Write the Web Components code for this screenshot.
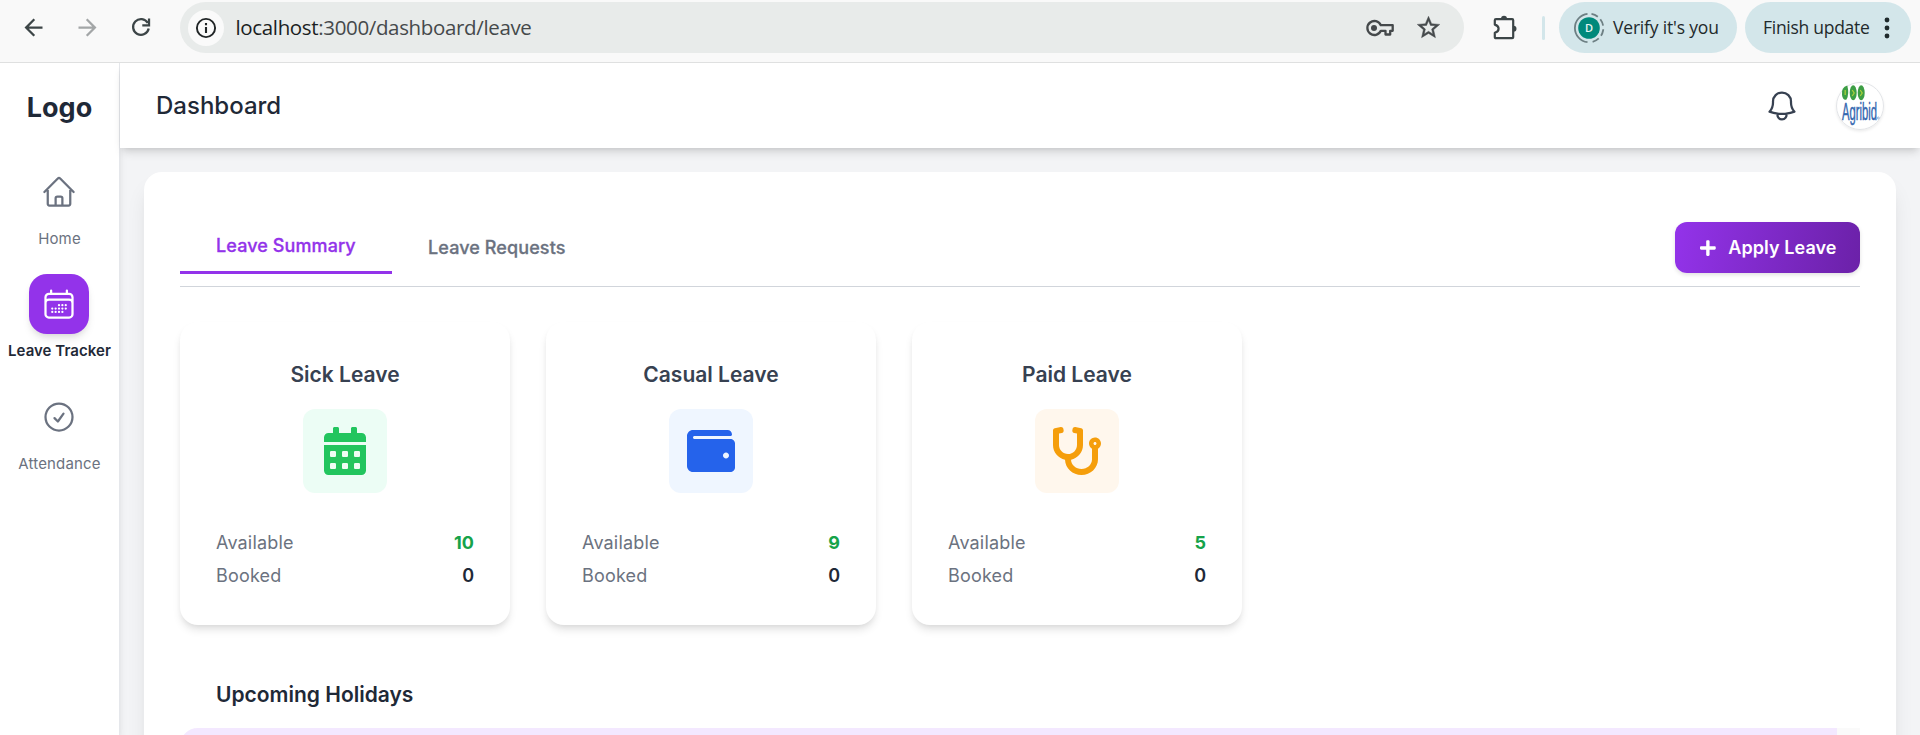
<!DOCTYPE html>
<html lang="en">
<head>
<meta charset="utf-8">
<title>Leave Tracker</title>
<style>
html,body{margin:0;height:100%;overflow:hidden;background:#f3f4f6;font-family:Inter,"Liberation Sans",sans-serif}
</style>
</head>
<body>
<leave-app></leave-app>
<script>
const define=(name,html)=>customElements.define(name,class extends HTMLElement{
  constructor(){super();const t=document.createElement('template');t.innerHTML=html;
    this.attachShadow({mode:'open'}).append(t.content.cloneNode(true));}
});

define('browser-bar',`
<style>
:host{display:flex;align-items:center;height:62px;box-sizing:content-box;background:#f9f9f9;border-bottom:1px solid #dfe0e0;font-family:"Open Sans","Noto Sans",sans-serif;color:#1f2a2c}
svg{display:block;flex:none}
.nav{display:flex;gap:27px;padding:0 28px 7px 20px;width:132px}
.url{display:flex;align-items:center;box-sizing:border-box;width:1284px;height:51px;margin-bottom:7px;border-radius:26px;background:#e8ebea;padding:0 22px 0 8px}
.info{width:36px;height:36px;border-radius:50%;background:#fafafa;display:grid;place-items:center;margin-right:11.5px}
.text{flex:1;font-size:20.5px;line-height:28px;letter-spacing:-.35px;color:#45494b;white-space:nowrap;padding-bottom:1px}
.text b{font-weight:400;color:#1b1e1f}
.tools{display:flex;align-items:center;gap:21px;color:#45494b}
.ext{margin:0 0 7px 28px}
.rule{width:3px;height:24px;border-radius:2px;background:#d3e6ea;margin:0 14px 7px 23px}
.pill{display:flex;align-items:center;box-sizing:border-box;height:51px;border-radius:26px;background:#d3e6ea;margin-bottom:7px;font-size:17.5px;line-height:26px;white-space:nowrap}
.verify{width:178px;padding-left:14px;margin-right:8px}
.verify svg{margin-right:8px}
.pill span{padding-bottom:1px}
.verify span{letter-spacing:-.18px}
.finish{width:166px;padding-left:18px}
.finish span{letter-spacing:-.28px;width:108px}
.finish svg{margin-left:13px}
</style>
<div class="nav">
<svg width="27" height="27" viewBox="0 0 24 24" fill="#3c4547"><path d="M20 11H7.83l5.59-5.59L12 4l-8 8 8 8 1.41-1.41L7.83 13H20v-2z"/></svg>
<svg width="27" height="27" viewBox="0 0 24 24" fill="#a3a6a7"><path d="M12 4l-1.41 1.41L16.17 11H4v2h12.17l-5.58 5.59L12 20l8-8z"/></svg>
<svg width="27" height="27" viewBox="0 0 24 24" fill="none" stroke="#3c4547" stroke-width="2"><path d="M17.6 8A7 7 0 1 0 18.400 12.9M18.700 4v6.200h-6"/></svg>
</div>
<div class="url"><div class="info"><svg width="22" height="22" viewBox="0 0 22 22" fill="none" stroke="#202526" stroke-width="1.9"><circle cx="11" cy="11" r="9.1"/><path d="M11 10v6M11 6v2.2" stroke-width="2.1"/></svg></div>
<div class="text"><b>localhost</b>:3000/dashboard/leave</div>
<div class="tools">
<svg width="28" height="20" viewBox="0 0 28 20" fill="none" stroke="#45494b" stroke-width="2.3"><path d="M14.8 7.2A7 7 0 1 0 14.8 12.8H19.5V16.5H24.2V12.8H26.7V7.2Z" stroke-linejoin="round"/><circle cx="8" cy="10" r="3" fill="#45494b" stroke="none"/></svg>
<svg width="27" height="27" viewBox="0 0 24 24" fill="#45494b" stroke="#45494b" stroke-width=".4"><path d="M22 9.24l-7.19-.62L12 2 9.19 8.63 2 9.24l5.46 4.73L5.82 21 12 17.27 18.18 21l-1.63-7.03L22 9.24zM12 15.4l-3.76 2.27 1-4.28-3.32-2.88 4.38-.38L12 6.1l1.71 4.04 4.38.38-3.32 2.88 1 4.28L12 15.4z"/></svg>
</div></div>
<svg class="ext" width="27" height="27" viewBox="0 0 27 27" fill="none" stroke="#3c4547" stroke-width="2.2"><path d="M4 5.2H20.2Q21.2 5.2 21.2 6.2V23.2Q21.2 24.2 20.2 24.2H4Q2.8 24.2 2.8 23V18.8Q6.6 17.6 6.6 14.7Q6.6 11.8 2.8 10.6V6.2Q2.8 5.2 4 5.2Z" stroke-linejoin="round"/><path d="M9 5a3 3.2 0 0 1 6 0zM21.5 11.8a3 3 0 0 1 0 6z" fill="#3c4547" stroke="none"/></svg>
<div class="rule"></div>
<div class="pill verify"><svg width="32" height="32" viewBox="0 0 32 32"><circle cx="16" cy="16" r="10.8" fill="#00897b"/><path d="M14.500 1.8A14.300 14.300 0 0 0 14.500 30.200" fill="none" stroke="#6d7f83" stroke-width="1.800"/><circle cx="16" cy="16" r="14.300" fill="none" stroke="#6d7f83" stroke-width="1.800" stroke-dasharray="7 3.500 7 3.500 7 3.500 7 3.500 0 50" transform="rotate(-80 16 16)"/><text x="16" y="19.800" text-anchor="middle" font-family="Open Sans" font-size="11" font-weight="600" fill="#e7f5f2">D</text></svg><span>Verify it's you</span></div>
<div class="pill finish"><span>Finish update</span><svg width="6" height="24" viewBox="0 0 6 24" fill="#1f2a2c"><circle cx="3" cy="4" r="2.4"/><circle cx="3" cy="12" r="2.4"/><circle cx="3" cy="20" r="2.4"/></svg></div>
`);

define('nav-item',`
<style>
:host{display:flex;flex-direction:column;align-items:center;height:112px;color:#6b7280;font-size:15px;line-height:22px;letter-spacing:.16px;white-space:nowrap}
.tile{width:60px;height:60px;border-radius:18px;display:grid;place-items:center;margin:0 1px 6px 0}
:host([active]) .tile{background:#9333ea;color:#fff;box-shadow:0 6px 9px -1.5px rgba(0,0,0,.1),0 3px 6px -3px rgba(0,0,0,.1)}
:host([active]){height:113px}
:host([active]) .label{color:#1f2937;font-weight:600;letter-spacing:.05px}
</style>
<div class="tile"><slot name="icon"></slot></div><div class="label"><slot></slot></div>
`);

define('side-bar',`
<style>
:host{display:block;box-sizing:border-box;width:120px;background:#fff;border-right:1px solid #e5e7eb;box-shadow:0 6px 9px -1.5px rgba(0,0,0,.1),0 3px 6px -3px rgba(0,0,0,.1);position:relative;z-index:1}
.logo{font-size:27px;line-height:42px;font-weight:700;color:#1f2937;text-align:center;padding:24px 0 33px}
svg{display:block}
</style>
<div class="logo">Logo</div>
<nav-item><svg slot="icon" width="36" height="36" viewBox="0 0 24 24" fill="none" stroke="currentColor" stroke-width="1.5" stroke-linecap="round" stroke-linejoin="round"><path d="M2.25 12l8.954-8.955c.44-.439 1.152-.439 1.591 0L21.75 12M4.5 9.75v10.125c0 .621.504 1.125 1.125 1.125H9.75v-4.875c0-.621.504-1.125 1.125-1.125h2.25c.621 0 1.125.504 1.125 1.125V21h4.125c.621 0 1.125-.504 1.125-1.125V9.75M8.25 21h8.25"/></svg>Home</nav-item>
<nav-item active><svg slot="icon" width="36" height="36" viewBox="0 0 24 24" fill="none" stroke="currentColor" stroke-width="1.5" stroke-linecap="round" stroke-linejoin="round"><path d="M6.75 3v2.25M17.25 3v2.25M3 18.75V7.5a2.25 2.25 0 012.25-2.25h13.5A2.25 2.25 0 0121 7.5v11.25m-18 0A2.25 2.25 0 005.25 21h13.5A2.25 2.25 0 0021 18.75m-18 0v-7.5A2.25 2.25 0 015.25 9h13.5A2.25 2.25 0 0121 11.25v7.5m-9-6h.008v.008H12v-.008zM12 15h.008v.008H12V15zm0 2.250h.008v.008H12v-.008zM9.750 15h.008v.008H9.750V15zm0 2.250h.008v.008H9.750v-.008zM7.500 15h.008v.008H7.500V15zm0 2.250h.008v.008H7.500v-.008zm6.750-4.500h.008v.008h-.008v-.008zm0 2.250h.008v.008h-.008V15zm0 2.250h.008v.008h-.008v-.008zm2.250-4.500h.008v.008H16.500v-.008zm0 2.250h.008v.008H16.500V15z"/></svg>Leave Tracker</nav-item>
<nav-item><svg slot="icon" width="36" height="36" viewBox="0 0 24 24" fill="none" stroke="currentColor" stroke-width="1.5" stroke-linecap="round" stroke-linejoin="round"><path d="M9 12.750L11.250 15 15 9.750M21 12a9 9 0 11-18 0 9 9 0 0118 0z"/></svg>Attendance</nav-item>
`);

define('top-header',`
<style>
:host{display:flex;align-items:center;box-sizing:border-box;height:85px;padding:0 36px 0 36px;background:#fff;box-shadow:0 6px 9px -1.5px rgba(0,0,0,.12),0 3px 6px -3px rgba(0,0,0,.12);position:relative;z-index:2}
h1{flex:1;margin:0;font-size:24px;line-height:36px;font-weight:500;color:#1f2937}
svg{display:block}
.bell{margin-right:36px}
.avatar{box-sizing:border-box;width:48px;height:48px;border-radius:50%;border:1px solid #e3e5e8;box-shadow:0 1.5px 3px rgba(0,0,0,.08)}
.avatar svg{margin:-1px;overflow:visible}
</style>
<h1>Dashboard</h1>
<svg class="bell" width="36" height="36" viewBox="0 0 24 24" fill="none" stroke="#374151" stroke-width="1.5" stroke-linecap="round" stroke-linejoin="round"><path d="M14.857 17.082a23.848 23.848 0 005.454-1.310A8.967 8.967 0 0118 9.750v-.7V9A6 6 0 006 9v.750a8.967 8.967 0 01-2.312 6.022c1.733.640 3.560 1.085 5.455 1.310m5.714 0a24.255 24.255 0 01-5.714 0m5.714 0a3 3 0 11-5.714 0"/></svg>
<div class="avatar"><svg width="48" height="48" viewBox="0 0 48 48"><path d="M11.300 3.500Q5 5 6 13Q7 19 10.500 17.500Q13.500 12 11.300 3.500Z" fill="#3d9e45"/><ellipse cx="17.200" cy="10.800" rx="3.500" ry="7.500" fill="#3d9e45"/><ellipse cx="25.200" cy="10.800" rx="3.500" ry="7.500" fill="#3d9e45"/><path d="M9.200 8v5M16.200 8l2 3-2 3M24.200 8l2 3-2 3" fill="none" stroke="#a9cf3a" stroke-width="1.300"/><text x="6" y="38" textLength="35" lengthAdjust="spacingAndGlyphs" font-family="Liberation Sans" font-size="23" fill="#3568b0" stroke="#3568b0" stroke-width=".5">Agribid</text><circle cx="42.300" cy="36" r="1" fill="none" stroke="#7fa4d4" stroke-width=".8"/></svg></div>
`);

define('leave-card',`
<style>
:host{display:block;box-sizing:border-box;width:330px;height:303px;padding:36px;border-radius:18px;background:#fff;box-shadow:0 6px 9px -1.5px rgba(0,0,0,.1),0 3px 6px -3px rgba(0,0,0,.1);font-size:18px;line-height:27px}
.title{text-align:center;font-size:21px;line-height:33px;font-weight:600;color:#374151}
.tile{width:84px;height:84px;border-radius:12px;background:var(--tint);display:grid;place-items:center;margin:18px auto 36px}
.row{display:flex;justify-content:space-between;margin-bottom:6px;color:#6b7280}
.row span{letter-spacing:.18px}
.row ::slotted(*){font-weight:600}
.row ::slotted(.a){font-weight:700}
</style>
<div class="title"><slot name="title"></slot></div>
<div class="tile"><slot name="icon"></slot></div>
<div class="row"><span>Available</span><slot name="available"></slot></div>
<div class="row"><span>Booked</span><slot name="booked"></slot></div>
`);

define('leave-panel',`
<style>
:host{display:block;box-sizing:border-box;margin:24px 24px 0 24px;height:700px;padding:50px 36px 0;background:#fff;border-radius:18px;box-shadow:0 15px 22.5px -4.5px rgba(0,0,0,.1),0 6px 9px -6px rgba(0,0,0,.1)}
svg{display:block}
.head{display:flex;align-items:center;height:51px;padding-bottom:13px;border-bottom:1px solid #d1d5db}
.tab{box-sizing:border-box;padding:0 36px;font-size:18px;line-height:27px;font-weight:500;letter-spacing:.1px;-webkit-text-stroke:.3px currentColor;color:#6b7280;white-space:nowrap}
.tab.on{color:#9333ea;border-bottom:3px solid #9333ea;width:212px;height:51px;padding-top:9px;margin-top:2px}
.btn{display:flex;align-items:center;box-sizing:border-box;width:185px;height:51px;margin-left:auto;padding-left:25px;gap:12.500px;border-radius:12px;background:linear-gradient(100deg,#9333ea,#6b21a8);color:#fff;font-size:18px;font-weight:600;letter-spacing:.08px;white-space:nowrap;box-shadow:0 2px 4px rgba(0,0,0,.12)}
.cards{display:flex;gap:36px;padding-top:35px}
.a{color:#16a34a}.b{color:#1f2937}
h2{margin:52px 0 0;padding:0 36px;font-size:21px;line-height:36px;font-weight:600;color:#1f2937;height:51px;box-sizing:border-box}
.list{display:flex;height:90px;border-radius:18px 0 0 0;overflow:hidden;background:#fafafa}
.list div{width:1657px;background:#f3e8ff}
</style>
<div class="head"><div class="tab on">Leave Summary</div><div class="tab">Leave Requests</div>
<div class="btn"><svg width="15.750" height="18" viewBox="0 0 448 512" fill="#fff"><path d="M416 208H272V64c0-17.670-14.330-32-32-32h-32c-17.670 0-32 14.330-32 32v144H32c-17.670 0-32 14.330-32 32v32c0 17.670 14.330 32 32 32h144v144c0 17.670 14.330 32 32 32h32c17.670 0 32-14.330 32-32V304h144c17.670 0 32-14.330 32-32v-32c0-17.670-14.330-32-32-32z"/></svg><span>Apply Leave</span></div></div>
<div class="cards">
<leave-card style="--tint:#ecfdf5"><span slot="title">Sick Leave</span><svg slot="icon" width="42" height="48" viewBox="0 0 448 512" fill="#22c55e"><path fill-rule="evenodd" d="M0 464c0 26.500 21.500 48 48 48h352c26.500 0 48-21.500 48-48V192H0v272zM76 256h40q12 0 12 12v40q0 12-12 12H76q-12 0-12-12v-40q0-12 12-12zM204 256h40q12 0 12 12v40q0 12-12 12h-40q-12 0-12-12v-40q0-12 12-12zM332 256h40q12 0 12 12v40q0 12-12 12h-40q-12 0-12-12v-40q0-12 12-12zM76 384h40q12 0 12 12v40q0 12-12 12H76q-12 0-12-12v-40q0-12 12-12zM204 384h40q12 0 12 12v40q0 12-12 12h-40q-12 0-12-12v-40q0-12 12-12zM332 384h40q12 0 12 12v40q0 12-12 12h-40q-12 0-12-12v-40q0-12 12-12zM400 64h-48V16c0-8.800-7.200-16-16-16h-32c-8.800 0-16 7.200-16 16v48H160V16c0-8.800-7.200-16-16-16h-32c-8.800 0-16 7.200-16 16v48H48C21.500 64 0 85.500 0 112v48h448v-48c0-26.500-21.500-48-48-48z"/></svg><span slot="available" class="a">10</span><span slot="booked" class="b">0</span></leave-card>
<leave-card style="--tint:#eff6ff"><span slot="title">Casual Leave</span><svg slot="icon" width="48" height="48" viewBox="0 0 512 512" fill="#2563eb"><path d="M461.200 128H80c-8.840 0-16-7.160-16-16s7.160-16 16-16h384c8.840 0 16-7.160 16-16 0-26.510-21.490-48-48-48H64C28.650 32 0 60.650 0 96v320c0 35.350 28.650 64 64 64h397.200c28.020 0 50.800-21.530 50.800-48V176c0-26.470-22.780-48-50.800-48zM416 336c-17.670 0-32-14.330-32-32s14.330-32 32-32 32 14.330 32 32-14.330 32-32 32z"/></svg><span slot="available" class="a">9</span><span slot="booked" class="b">0</span></leave-card>
<leave-card style="--tint:#fff7ed"><span slot="title">Paid Leave</span><svg slot="icon" width="48" height="48" viewBox="0 0 512 512" fill="#f59e0b"><path d="M447.100 112c-34.200.500-62.300 28.400-63 62.600-.500 24.300 12.500 45.600 32 56.800V344c0 57.300-50.200 104-112 104-60 0-109.200-44.100-111.900-99.200C265 333.800 320 269.200 320 192V36.600c0-11.400-8.100-21.300-19.300-23.500L237.800.5c-13-2.600-25.600 5.800-28.200 18.800L206.400 35c-2.600 13 5.800 25.600 18.800 28.200l30.700 6.100v121.400c0 52.900-42.200 96.700-95.100 97.200-53.400.5-96.900-42.700-96.900-96V69.400l30.700-6.100c13-2.600 21.400-15.200 18.800-28.200l-3.100-15.700C107.700 6.400 95.100-2 82.100.6L19.300 13C8.100 15.300 0 25.100 0 36.600V192c0 77.300 55.100 142 128.100 156.800C130.700 439.200 208.600 512 304 512c97 0 176-75.400 176-168V231.400c19.100-11.100 32-31.700 32-55.400 0-35.700-29.200-64.500-64.900-64zm.9 80c-8.800 0-16-7.200-16-16s7.200-16 16-16 16 7.200 16 16-7.200 16-16 16z"/></svg><span slot="available" class="a">5</span><span slot="booked" class="b">0</span></leave-card>
</div>
<h2>Upcoming Holidays</h2>
<div class="list"><div></div></div>
`);

define('leave-app',`
<style>
:host{display:flex;flex-direction:column;width:1920px;height:735px;overflow:hidden}
.body{display:flex;flex:1;min-height:0}
main{flex:1;min-width:0}
side-bar{flex:none}
</style>
<browser-bar></browser-bar>
<div class="body"><side-bar></side-bar><main><top-header></top-header><leave-panel></leave-panel></main></div>
`);
</script>
</body>
</html>
